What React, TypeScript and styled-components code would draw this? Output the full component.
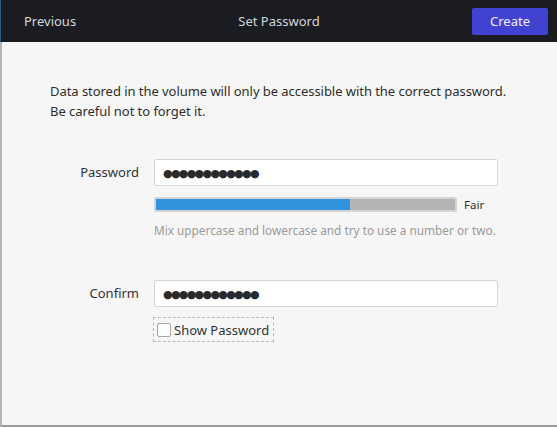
import React from "react";
import styled, { createGlobalStyle } from "styled-components";

const Global = createGlobalStyle`
  html, body { margin: 0; padding: 0; background: #f6f6f6; }
  body { font-family: "Noto Sans", "DejaVu Sans", sans-serif; }
  * { box-sizing: border-box; }
`;

const Window = styled.div`
  width: 557px;
  height: 427px;
  display: flex;
  flex-direction: column;
  background: #f6f6f6;
`;

const Header = styled.header`
  height: 42px;
  flex: none;
  background: #1b1c22;
  display: grid;
  grid-template-columns: 1fr auto 1fr;
  align-items: center;
  padding: 0 9px;
  color: #d6d6d6;
  font-size: 13px;
  border-left: 1px solid #2c5a86;
`;

const NavText = styled.span<{ $align?: string; $indent?: number }>`
  justify-self: ${(p) => p.$align || "start"};
  margin-left: ${(p) => p.$indent || 0}px;
`;

const PrimaryButton = styled.button`
  justify-self: end;
  height: 27px;
  width: 76px;
  border: none;
  border-radius: 2px;
  background: #4242d2;
  color: #ececff;
  font-family: inherit;
  font-size: 13px;
  padding: 0;
`;

const Content = styled.main`
  flex: 1;
  border-left: 2px solid #b4b4b4;
  border-bottom: 2px solid #9c9c9c;
  padding: 39px 0 0 48px;
  color: #333;
  font-size: 13px;
`;

const Intro = styled.p`
  margin: 0;
  line-height: 20px;
  color: #2e2e2e;
  letter-spacing: -0.05px;
`;

const Form = styled.div`
  display: grid;
  grid-template-columns: 89px 344px;
  column-gap: 15px;
  margin-top: 38px;
`;

const Label = styled.label`
  justify-self: end;
  height: 27px;
  line-height: 27px;
  color: #333;
`;

const Field = styled.div<{ $gap?: number }>`
  display: flex;
  flex-direction: column;
  margin-bottom: ${(p) => p.$gap || 0}px;
`;

const Input = styled.div`
  height: 27px;
  background: #fff;
  border: 1px solid #d6d6d6;
  border-radius: 2px;
  padding-left: 8px;
  display: flex;
  align-items: center;
  color: #2a2a2a;
  font-size: 11px;
  letter-spacing: -1.7px;
`;

const MeterRow = styled.div`
  display: flex;
  align-items: center;
  margin-top: 11px;
  gap: 7px;
`;

const Track = styled.div`
  width: 303px;
  height: 15px;
  border: 2px solid #d4d4d4;
  background: #b4b4b4;
  border-radius: 2px;
  overflow: hidden;
`;

const Fill = styled.div`
  height: 100%;
  background: #3193de;
`;

const MeterLabel = styled.span`
  font-size: 11.5px;
  color: #333;
`;

const Hint = styled.div`
  margin-top: 8px;
  font-size: 11.8px;
  line-height: 20px;
  color: #9a9a9a;
  white-space: nowrap;
`;

const CheckFrame = styled.label`
  align-self: flex-start;
  margin-top: 10px;
  margin-left: -1px;
  height: 25px;
  display: flex;
  align-items: center;
  gap: 3px;
  padding: 0 4px 0 3px;
  border: 1px dashed #b8b8b8;
  color: #333;
  font-size: 13px;
`;

const Box = styled.span`
  width: 14px;
  height: 14px;
  border: 1px solid #a6a6a6;
  border-radius: 2px;
  background: #fff;
`;

const dots = "●●●●●●●●●●●●";

export default function App() {
  return (
    <>
      <Global />
      <Window>
        <Header>
          <NavText $indent={14}>Previous</NavText>
          <NavText $align="center">Set Password</NavText>
          <PrimaryButton>Create</PrimaryButton>
        </Header>
        <Content>
          <Intro>
            Data stored in the volume will only be accessible with the correct password.
            <br />
            Be careful not to forget it.
          </Intro>
          <Form>
            <Label>Password</Label>
            <Field $gap={40}>
              <Input>{dots}</Input>
              <MeterRow>
                <Track>
                  <Fill style={{ width: "65%" }} />
                </Track>
                <MeterLabel>Fair</MeterLabel>
              </MeterRow>
              <Hint>Mix uppercase and lowercase and try to use a number or two.</Hint>
            </Field>
            <Label>Confirm</Label>
            <Field>
              <Input>{dots}</Input>
              <CheckFrame>
                <Box />
                Show Password
              </CheckFrame>
            </Field>
          </Form>
        </Content>
      </Window>
    </>
  );
}
